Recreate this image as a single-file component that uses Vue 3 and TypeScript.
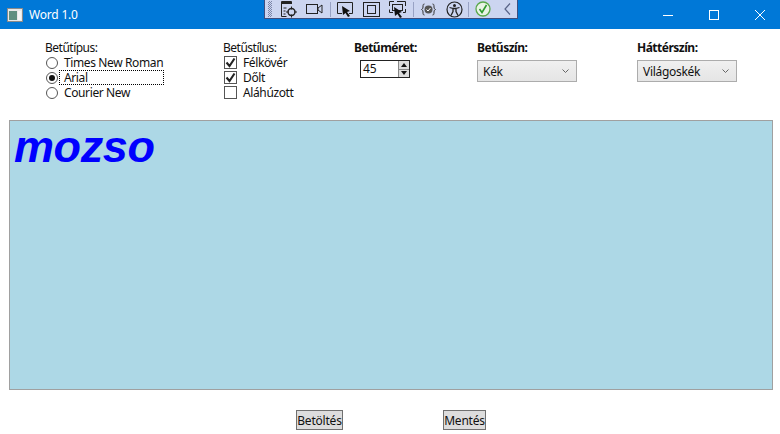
<template>
  <div class="window">
    <header class="titlebar">
      <svg class="app-icon" width="16" height="14" viewBox="0 0 16 14">
        <rect x="0.5" y="0.5" width="15" height="13" fill="#e8e8e8" stroke="#8a8a8a" />
        <rect x="2" y="3" width="8" height="9" fill="#5f8f80" />
        <rect x="11" y="3" width="3" height="9" fill="#f5f5f5" />
      </svg>
      <span class="app-title">Word 1.0</span>
      <div class="win-controls">
        <svg width="10" height="10" viewBox="0 0 10 10"><path d="M0 5.5h10" stroke="#fff" fill="none" /></svg>
        <svg width="10" height="10" viewBox="0 0 10 10"><rect x="0.5" y="0.5" width="9" height="9" stroke="#fff" fill="none" /></svg>
        <svg width="10" height="10" viewBox="0 0 10 10"><path d="M0 0l10 10M10 0L0 10" stroke="#fff" fill="none" /></svg>
      </div>
    </header>

    <!-- debug toolbar sits on top of the title bar -->
    <div class="dbg-toolbar">
      <span class="gripper"></span>
      <svg class="tool first" width="17" height="19" viewBox="0 0 17 19">
        <path d="M1.5 1.5h10v2h-10zM1.5 3.5v13h5M3.500 8h3M3.500 11h2M3.500 14h2" fill="none" stroke="#222" />
        <path d="M1 2h11v2H1z" fill="#222" />
        <circle cx="11.500" cy="12" r="3.500" fill="none" stroke="#222" stroke-width="1.400" />
        <path d="M11.500 6.500v3M11.500 14.500v3M6 12h3M14 12h3" stroke="#222" />
      </svg>
      <svg class="tool" style="margin-left:9px" width="17" height="12" viewBox="0 0 17 12">
        <rect x="0.5" y="1.5" width="11" height="9" fill="none" stroke="#222" />
        <path d="M12 5l4-3v8l-4-3z" fill="none" stroke="#222" />
      </svg>
      <span class="sep" style="margin-left:7px"></span>
      <svg class="tool" style="margin-left:6px" width="17" height="17" viewBox="0 0 17 17">
        <path d="M5 12.500H.5v-11h15v11H12" fill="none" stroke="#222" />
        <path d="M5 5l8 5-3 1 3 4-2 1-2.500-4L6 14z" fill="#111" />
      </svg>
      <svg class="tool" style="margin-left:9px" width="17" height="15" viewBox="0 0 17 15">
        <rect x="0.500" y="0.500" width="16" height="14" fill="none" stroke="#222" />
        <rect x="4.500" y="3.500" width="8" height="8" fill="none" stroke="#222" />
      </svg>
      <svg class="tool" style="margin-left:9px" width="17" height="18" viewBox="0 0 17 18">
        <path d="M4 12.500H.5v-3M.5 6V1.500H5M8 1.500h4M12 1.500h4.500V6M16.500 9v3.500H14" fill="none" stroke="#222" />
        <rect x="3.500" y="4.500" width="10" height="6" fill="none" stroke="#222" />
        <path d="M5 7l8 5-3 1 3 4-2 1-2.500-4L6 16z" fill="#111" />
      </svg>
      <span class="sep" style="margin-left:7px"></span>
      <svg class="tool" style="margin-left:7px" width="15" height="13" viewBox="0 0 15 13">
        <path d="M3.500 1C2 1 2 2 2 4S1 6 .5 6.500C1 7 2 7 2 9s0 3 1.500 3M11.500 1C13 1 13 2 13 4s1 2 1.500 2.500C14 7 13 7 13 9s0 3-1.500 3" fill="none" stroke="#333" />
        <circle cx="7.500" cy="6.500" r="4" fill="#555" />
        <path d="M5.500 6.500l1.500 1.500 2.500-3" fill="none" stroke="#fff" />
      </svg>
      <svg class="tool" style="margin-left:10px" width="17" height="17" viewBox="0 0 17 17">
        <circle cx="8.500" cy="8.500" r="7.500" fill="none" stroke="#222" stroke-width="1.200" />
        <circle cx="8.500" cy="4.500" r="1.500" fill="#222" />
        <path d="M3.500 6.500l3.500 1v3l-2 4M13.500 6.500l-3.500 1v3l2 4M7 7.500h3" fill="none" stroke="#222" stroke-width="1.300" />
      </svg>
      <span class="sep" style="margin-left:5px"></span>
      <svg class="tool" style="margin-left:6px" width="16" height="16" viewBox="0 0 16 16">
        <circle cx="8" cy="8" r="7" fill="#e8f3e4" stroke="#5aa84a" stroke-width="1.300" />
        <path d="M4.500 8l2.500 3.500L11.500 4" fill="none" stroke="#2f9a2f" stroke-width="1.600" />
      </svg>
      <svg class="tool" style="margin-left:13px" width="7" height="12" viewBox="0 0 7 12">
        <path d="M6 .5L1 6l5 5.500" fill="none" stroke="#5a6488" stroke-width="1.200" />
      </svg>
    </div>

    <section class="options">
      <div class="col col-font">
        <div class="label">Betűtípus:</div>
        <div v-for="f in fonts" :key="f" class="row">
          <span class="radio" :class="{ on: f === 'Arial' }"></span>
          <span class="row-text" :class="{ focused: f === 'Arial' }">{{ f }}</span>
        </div>
      </div>
      <div class="col col-style">
        <div class="label">Betűstílus:</div>
        <div v-for="s in styles" :key="s.name" class="row">
          <span class="check">
            <svg v-if="s.on" width="11" height="11" viewBox="0 0 11 11">
              <path d="M1.500 5.500l3 3.500 5-7.500" fill="none" stroke="#222" stroke-width="2.100" />
            </svg>
          </span>
          <span class="check-text">{{ s.name }}</span>
        </div>
      </div>
      <div class="col col-size">
        <div class="label bold">Betűméret:</div>
        <div class="spinner">
          <span class="spin-value">45</span>
          <span class="spin-btns">
            <span class="spin-btn"><i class="up"></i></span>
            <span class="spin-btn"><i class="down"></i></span>
          </span>
        </div>
      </div>
      <div class="col col-color">
        <div class="label bold">Betűszín:</div>
        <div class="combo">
          <span>Kék</span>
          <svg width="7" height="4" viewBox="0 0 7 4"><path d="M.5 .5l3 3 3-3" fill="none" stroke="#666" /></svg>
        </div>
      </div>
      <div class="col">
        <div class="label bold">Háttérszín:</div>
        <div class="combo">
          <span>Világoskék</span>
          <svg width="7" height="4" viewBox="0 0 7 4"><path d="M.5 .5l3 3 3-3" fill="none" stroke="#666" /></svg>
        </div>
      </div>
    </section>

    <main class="editor">mozso</main>

    <footer class="actions">
      <button class="btn load">Betöltés</button>
      <button class="btn save">Mentés</button>
    </footer>
  </div>
</template>

<script setup lang="ts">
const fonts: string[] = ['Times New Roman', 'Arial', 'Courier New']

const styles: { name: string; on: boolean }[] = [
  { name: 'Félkövér', on: true },
  { name: 'Dőlt', on: true },
  { name: 'Aláhúzott', on: false },
]
</script>

<style>
html,
body {
  margin: 0;
  background: #fff;
}
</style>

<style scoped>
.window {
  position: relative;
  width: 780px;
  height: 434px;
  overflow: hidden;
  background: #fff;
  font-family: "Noto Sans", "Open Sans", sans-serif;
  font-size: 12px;
  color: #111;
}

.titlebar {
  height: 29px;
  background: #0078d7;
  display: flex;
  align-items: center;
  padding-left: 7px;
  color: #fff;
}

.app-icon {
  flex: none;
}

.app-title {
  margin-left: 6px;
  letter-spacing: -0.2px;
}

.win-controls {
  margin-left: auto;
  display: flex;
  gap: 36px;
  padding-right: 15px;
}

.dbg-toolbar {
  position: absolute;
  left: 264px;
  top: 0;
  width: 254px;
  height: 19px;
  box-sizing: border-box;
  background: #ccd5f0;
  border: 1px solid #3f4f7f;
  border-top: none;
  display: flex;
  align-items: center;
}

.gripper {
  width: 4px;
  height: 16px;
  margin-left: 3px;
  background: repeating-conic-gradient(#7c86a8 0 25%, transparent 0 50%) 0 0 / 2px 2px;
}

.tool {
  flex: none;
}

.tool.first {
  margin-left: 8px;
}

.sep {
  flex: none;
  width: 1px;
  height: 15px;
  background: #98a2c4;
}

.options {
  height: 91px;
  box-sizing: border-box;
  display: flex;
  padding: 11px 0 0 45px;
}

.col-font {
  width: 178px;
}

.col-style {
  width: 131px;
}

.col-size {
  width: 123px;
}

.col-color {
  width: 160px;
}

.label {
  height: 15px;
  line-height: 15px;
  letter-spacing: -0.5px;
}

.label.bold {
  font-weight: 700;
  height: 20px;
}

.row {
  height: 15px;
  display: flex;
  align-items: center;
  line-height: 15px;
  letter-spacing: -0.38px;
}

.radio {
  flex: none;
  position: relative;
  width: 12px;
  height: 12px;
  margin-left: 1px;
  margin-right: 1px;
  box-sizing: border-box;
  border: 1px solid #555;
  border-radius: 50%;
  background: #fff;
}

.radio.on::after {
  content: "";
  position: absolute;
  left: 2px;
  top: 2px;
  width: 6px;
  height: 6px;
  border-radius: 50%;
  background: #111;
}

.row-text {
  width: 98px;
  padding: 0 1px 0 4px;
  border: 1px solid transparent;
  height: 13px;
  line-height: 13px;
  white-space: nowrap;
}

.row-text.focused {
  border: 1px dotted #000;
}

.check {
  flex: none;
  width: 13px;
  height: 13px;
  margin-left: 1px;
  box-sizing: border-box;
  border: 1px solid #555;
  background: #fff;
  display: flex;
  align-items: center;
  justify-content: center;
}

.check-text {
  margin-left: 6px;
}

.spinner {
  width: 50px;
  height: 18px;
  margin-left: 6px;
  box-sizing: border-box;
  border: 1px solid #222;
  display: flex;
  background: #fff;
}

.spin-value {
  flex: 1;
  padding-left: 2px;
  line-height: 16px;
}

.spin-btns {
  width: 10px;
  display: flex;
  flex-direction: column;
  border-left: 1px solid #888;
}

.spin-btn {
  flex: 1;
  background: #dcdcdc;
  display: flex;
  align-items: center;
  justify-content: center;
}

.spin-btn + .spin-btn {
  border-top: 1px solid #888;
}

.up,
.down {
  width: 0;
  height: 0;
  border-left: 3px solid transparent;
  border-right: 3px solid transparent;
}

.up {
  border-bottom: 4px solid #111;
}

.down {
  border-top: 4px solid #111;
}

.combo {
  width: 100px;
  height: 22px;
  box-sizing: border-box;
  border: 1px solid #acacac;
  background: linear-gradient(#f0f0f0, #e5e5e5);
  display: flex;
  align-items: center;
  justify-content: space-between;
  padding: 0 7px 0 5px;
  letter-spacing: -0.3px;
}

.editor {
  height: 270px;
  margin: 0 7px 0 9px;
  box-sizing: border-box;
  border: 1px solid #a0a0a0;
  background: #add8e6;
  padding-left: 4px;
  font-family: "Liberation Sans", Arial, sans-serif;
  font-size: 45px;
  font-weight: 700;
  font-style: italic;
  line-height: 52px;
  color: #00f;
  letter-spacing: -0.4px;
}

.actions {
  display: flex;
  padding: 20px 0 0 296px;
  gap: 100px;
}

.btn {
  height: 20px;
  padding: 0;
  box-sizing: border-box;
  border: 1px solid #707070;
  background: #ddd;
  font: inherit;
  color: #111;
  letter-spacing: -0.2px;
}

.btn.load {
  width: 47px;
}

.btn.save {
  width: 43px;
}
</style>
